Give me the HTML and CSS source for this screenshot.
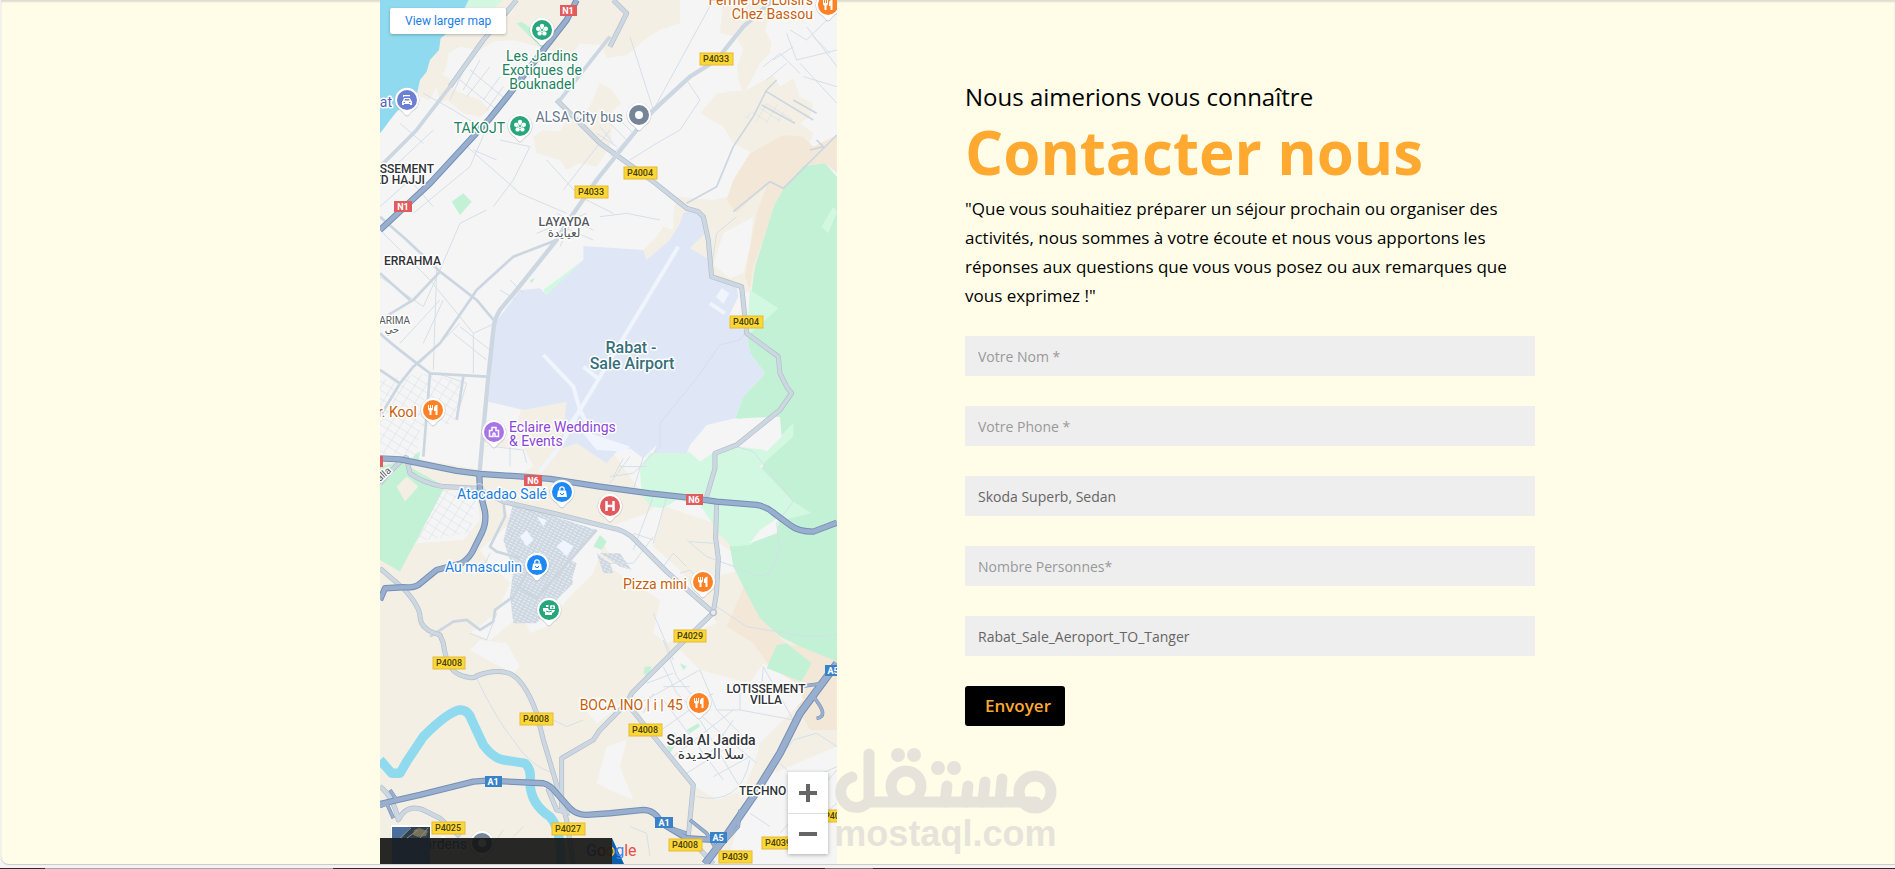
FILE: index.html
```html
<!DOCTYPE html>
<html lang="fr">
<head>
<meta charset="utf-8">
<title>Contacter nous</title>
<link rel="stylesheet" href="styles.css">
</head>
<body>
<main class="page">
  <section class="map" aria-label="Carte">
    <svg class="map-canvas" viewBox="0 0 457 864" preserveAspectRatio="xMinYMin slice">
      <defs>
        <pattern id="blocks" width="28" height="22" patternUnits="userSpaceOnUse" patternTransform="rotate(32)">
          <path class="street" d="M0 0H28M0 0V22"/>
        </pattern>
        <pattern id="dense" width="13" height="9" patternUnits="userSpaceOnUse" patternTransform="rotate(28)">
          <rect width="13" height="9" fill="#cdd7e1"/><rect x="2" y="3" width="8" height="3" fill="#edf0f3"/>
        </pattern>
        <g id="pin-base">
          <path d="M0 16.500C-2 16.500-3 13-7 10.500A12.500 12.500 0 1 1 7 10.500C3 13 2 16.500 0 16.500Z" fill="#8a8f94" opacity=".4"/>
          <path d="M0 15.500C-2 15.500-3 12-7 9.500A12 12 0 1 1 7 9.500C3 12 2 15.500 0 15.500Z" fill="#fff"/>
        </g>
        <g id="food" fill="#fff"><path d="M-5-5h1v3h1v-3h1v3h1v-3h1v4q0 1-1.500 1.800V5h-2V.8Q-5 0-5-1Z"/><path d="M4.500-5.500V5h-2V1H1v-3.500Q1.500-5 4.500-5.500Z"/></g>
        <g id="flower"><g fill="#fff"><circle cy="-4" r="2.200"/><circle cx="3.800" cy="-1.200" r="2.200"/><circle cx="2.400" cy="3.400" r="2.200"/><circle cx="-2.400" cy="3.400" r="2.200"/><circle cx="-3.800" cy="-1.200" r="2.200"/><circle r="2"/></g><circle r="1" fill="#26a67a"/></g>
        <g id="bag"><path d="M-4-1.500H4L5 5H-5Z" fill="#fff"/><path d="M-2.200-1.500V-3a2.200 2.200 0 0 1 4.400 0v1.500" fill="none" stroke="#fff" stroke-width="1.300"/><path d="M-1.700 1a1.700 1.700 0 0 0 3.400 0" fill="none" stroke="#1e88f5"/></g>
        <path id="r-n1" d="M590 0L560 60 490 150 440 215 390 280 330 355 150 550 0 690"/>
        <path id="r-n6" d="M0 1375L60 1378 120 1390 230 1413 300 1422 430 1430 510 1437 660 1460 810 1480 920 1492 1010 1505 1130 1515Q1160 1520 1180 1538L1230 1575Q1255 1595 1300 1595L1371 1568"/>
        <path id="r-ring" d="M298 1425L300 1475 315 1535Q320 1570 305 1600L280 1650Q270 1672 245 1690L170 1710 115 1755Q100 1764 70 1762L15 1765 0 1800"/>
        <path id="r-a1" d="M0 2412L120 2385 280 2345 320 2342 490 2350Q510 2354 530 2380L570 2425Q590 2445 620 2445L690 2440 790 2430Q825 2430 845 2470L920 2515 1000 2520"/>
        <path id="r-a5" d="M1371 1990L1260 2140 1200 2260 1120 2390 1030 2520 975 2592"/>
        <path id="r-a5b" d="M1260 2060L1330 2050M1300 2090Q1350 2150 1310 2155M930 2460L980 2500 1010 2550M1080 2430L1075 2480 1030 2530M30 2370L50 2400 0 2420M20 2410L40 2455M830 2470L920 2500"/>
        <path id="r-p4004" d="M530 300L660 430 820 545 920 625 955 635 970 650 985 720 995 830 1085 860 1100 1000 1195 1070 1200 1120 1220 1160 1235 1180 1200 1230 1070 1335 1005 1360 1005 1405 980 1490"/>
        <path id="r-diag" d="M0 1450Q80 1360 80 1375L90 1420Q130 1450 190 1460L290 1465 370 1505 520 1540 690 1583Q740 1590 770 1625L860 1715 1000 1838 900 1935 755 2080 740 2110 660 2190 640 2220 545 2275V2430"/>
        <path id="r-east" d="M1010 1510L1007 1615 1015 1675 1010 1775 1000 1838"/>
        <path id="r-p4008" d="M0 1705L70 1765Q120 1820 120 1850Q122 1890 180 1905L190 1930Q200 2010 240 2025T290 2028Q340 2008 380 2018Q430 2030 470 2140L490 2220 520 2320 560 2460 580 2592"/>
        <path id="r-sala" d="M740 2110L940 2355 925 2510 1000 2592M530 2370H505L530 2430 570 2440M0 2360Q40 2390 55 2460Q80 2410 130 2430L180 2455 240 2510"/>
      </defs>

      <g class="terrain" transform="scale(.3333)">
        <path class="urban" d="M0 0H1380V2600H0Z"/>
        <path class="farm" d="M255 22L370 0H900V70L840 90 800 115 740 165 680 175 665 135 600 130 560 190 510 150 400 120 340 125 300 150 240 140 205 160 200 200 150 300 110 285 120 240 140 215 150 180 177 150 182 115 198 102Z"/>
        <path class="farm" d="M160 210L210 235 220 270 300 300 330 330 300 350 250 340 200 300 180 310ZM460 410L490 390 540 395 560 360 620 340 660 250 690 265 725 310 700 330 690 440 650 500 600 490 560 510 540 480 470 460ZM1030 0H1150L1170 50 1155 90 1175 130 1170 160 1140 190 1120 230 1090 280 1075 240 1070 200 1090 150 1070 110 1020 100ZM1010 280L1100 270 1180 225 1200 260 1240 235 1260 290 1300 310 1290 350 1260 370 1300 400 1280 450 1110 455 1060 430 1030 380 960 340ZM880 640L890 590 1000 600 1180 560 1150 700 1110 880 1060 860 990 830 985 800 930 745 960 690 900 720 800 780 790 750 830 710 850 680 880 690Z"/>
        <path class="farm-dark" d="M1040 600L1060 540 1110 460 1210 405 1270 410 1300 440 1371 405V520L1335 490 1270 498 1215 560 1185 610 1150 720 1120 800 1110 870 1095 830 1110 740 1130 640 1160 560 1110 600 1070 640Z"/>
        <path class="urban" d="M1030 700L1120 650 1110 740 1090 820 1050 835 1000 795Z"/>
        <path class="farm" d="M0 1385L310 1340 400 1310 430 1205 560 1205 600 1300 700 1360 800 1500 1030 1580 1110 1740 1371 1960V2592H0Z"/>
        <path class="farm-dark" d="M1100 1740L1140 1850 1220 1935 1320 1940 1371 1960V2190L1290 2190 1240 2100 1120 1930 1040 1880ZM1180 1960L1240 1990 1371 1990V2180L1300 2190Z"/>
        <path class="urban" d="M0 1160L320 1130 310 1410 130 1380 90 1360 0 1370ZM310 1340L430 1340 460 1400 420 1425 310 1410ZM170 1470L290 1475 300 1560 250 1620 110 1630ZM370 1495L520 1540 690 1580 640 1720 560 1800 500 1880 450 1900 430 1840 330 1920 270 1900 350 1840 390 1750 330 1690 300 1650 390 1570ZM660 1590L800 1540 860 1490 820 1640 900 1710 990 1830 1010 1870 860 1930 820 1900 840 1800 700 1710ZM300 1920L380 1930 420 2000 400 2020 340 1990 270 1950ZM1020 1630L1060 1660 1080 1710 1010 1730Z"/>
        <path class="urban" d="M760 2080L900 1950 960 2010 1110 2050 1150 1990 1250 2050 1270 2100 1140 2230 1120 2300 1090 2370 1010 2400 930 2350 800 2200ZM680 2240L740 2220 720 2300 760 2400 690 2370 650 2350ZM600 2110L660 2090 720 2120 650 2170ZM1090 2420L1180 2320 1371 2240V2592H1040Z"/>
        <path class="green" d="M1371 530L1335 490 1270 498 1215 560 1185 610 1175 640 1150 720 1125 800 1115 870 1100 1000 1110 1060 1155 1120 1090 1190 1065 1255 1200 1270 1050 1640 1060 1700 1100 1780 1140 1855 1200 1910 1260 1940 1371 1985Z"/>
        <path class="green" d="M1190 1935L1160 2005 1265 2045 1295 1990 1220 1930ZM0 1400L60 1385 195 1460 100 1640 60 1715 0 1680ZM100 1370L120 1355 115 1390 90 1400ZM410 70L425 65 520 130 490 150ZM215 605L250 580 275 605 240 645ZM450 840L465 835 455 850ZM795 2000L815 2000 805 2030 790 2020ZM900 1990L920 2000 910 2010ZM920 2190L955 2170 960 2180 930 2200ZM860 2240L890 2230 870 2260ZM640 1640L660 1605 680 1625 665 1650Z"/>
        <path class="green-light" d="M255 22L266 0H370L345 22ZM1110 870L1195 925 1100 1010ZM780 1405L810 1360 930 1357 960 1385 1005 1355 1070 1340 1160 1350 1240 1270V1310L1140 1400 1240 1505 1295 1540 1190 1565 1110 1635 1055 1640 1020 1605 960 1515 890 1500 850 1525 810 1520 785 1485ZM490 870L610 780V795L500 885ZM1325 680L1360 620 1371 635 1345 700Z"/>
        <path class="urban" d="M960 1280L1090 1255 1200 1250 1205 1310 1160 1355 1120 1335 1070 1340 1000 1355 960 1385 930 1355ZM1110 1630L1140 1590 1200 1550 1190 1600Z"/>
        <path class="farm" d="M50 1460L80 1430 115 1460 75 1505Z"/>
        <path class="airport" d="M610 738L790 750 800 780 870 720 900 670 910 640 940 630 970 640 985 690 930 745 990 780 995 830 1070 860 1075 890 1045 950 1100 1000 1110 1060 1155 1120 1090 1190 1065 1255 980 1275 930 1335 920 1360 820 1360 830 1335 790 1375 750 1345 710 1355 680 1390 590 1330 530 1350 550 1290 560 1205 430 1230 325 1205 345 970 420 870 480 865 500 885 610 780Z"/>
        <path class="runway" d="M490 1065L580 1160 600 1230 625 1280M895 740L600 1230 540 1340 480 1415M610 1100L660 1140M990 910L1035 940M600 1230L560 1290"/>
        <path class="apron" d="M1008 890L1025 865 1048 880 1030 912ZM600 1290L750 1340 730 1355 650 1350Z"/>
        <path class="sea" d="M0 0H266L255 22 198 102 182 115 177 150 150 180 140 215 120 240 110 285 50 335 30 360 12 385 0 400Z"/>
        <path class="river" d="M0 2280L35 2320H60L80 2285 130 2210Q205 2135 240 2130Q265 2130 275 2160L310 2235Q340 2275 370 2280L435 2290Q455 2310 450 2340Q448 2410 510 2450Q545 2490 542 2592"/>
        <path fill="url(#blocks)" d="M0 1140L140 1120 260 1150 225 1270 120 1280 110 1370 0 1360ZM180 1465L290 1490 270 1600 110 1625ZM1090 350L1180 300 1240 360 1140 370Z"/>
        <path fill="url(#dense)" d="M400 1510L650 1590 560 1690 580 1750 520 1810 470 1870 400 1870 390 1790 400 1710 370 1620ZM650 1660L690 1690 700 1720 670 1720ZM660 1660L720 1660 755 1710 720 1700ZM570 1680L590 1690 570 1760 550 1760Z"/>
        <path class="apron" d="M420 1610L440 1590 460 1620 440 1640ZM530 1640L550 1620 580 1640 560 1670ZM470 1550L500 1560 490 1580Z"/>
      </g>

      <g class="roads" transform="scale(.3333)">
        <path class="street" d="M210 300L260 190M240 240L350 330M270 210L380 300M300 180L250 270M330 200L260 290M360 230L310 300M370 260L320 330M0 540L160 390M130 280L220 330 300 380M60 370L130 430M0 620L90 540 160 620M250 430L420 580 560 640M100 640L270 500 330 360M360 420L450 440 400 540 340 620M500 480L600 590 700 640M550 570L690 390M280 450L350 480M660 380L700 430M650 400L710 440M690 370L740 420M720 360L760 400M750 110L820 330 1000 0M690 470L920 240 960 300 900 390 830 430 750 480M1230 90L1280 120 1371 30M1220 100L1250 180 1371 150M1150 200L1200 160 1260 220M1180 180L1240 140M1160 240L1220 190M1260 190L1371 310M1270 230L1371 260M1280 80L1371 200M1300 110L1350 160"/>
        <path class="lane-thin" d="M1371 405L1210 565 1170 545 1060 635M1190 240L1160 270 1120 350 1060 440 1010 560 920 610M1160 275L1300 360M1145 315L1245 370M1240 300L1310 340M1290 450L1330 440 1310 420"/>
        <path class="street" d="M0 690L150 840 280 1000 345 970M0 830L130 920 180 810 240 670 320 630M170 810L160 1110M220 1000L320 1080M240 980L330 1050M190 900L130 1030M60 1030L180 900M120 1090L240 970M280 1000V1120M170 1120L260 1150 230 1250M360 870L410 900M390 840L430 880M340 1340L430 1350 440 1390M390 1340V1400M500 660L640 720M470 700L620 640M530 640L640 690M540 740L580 650M660 650L740 640 840 660M990 830L1010 700 1070 650"/>
        <path class="lane" d="M0 960L100 900 180 815 290 900 345 965M180 815L80 720 0 650M530 720L400 770 290 870 270 900 180 1030 100 1100 60 1150 0 1250M0 1000Q30 1030 150 1120L320 1130M0 1110L60 1150M150 1120L130 1370M250 1130L230 1260M0 820L90 900"/>
        <path class="street" d="M950 1135L1020 1035 1080 1020 1100 990M950 1135L840 1270V1340L760 1420 690 1430M750 1370L690 1450M790 1370L760 1470M720 1400H800M730 1375L700 1430M820 1490L760 1650M860 1490L820 1630M760 1600L820 1620M920 1620L980 1670 1090 1710 1130 1730 1170 1720 1200 1640 1190 1570 1240 1505 1120 1355 1070 1340M930 1625L1000 1630M1010 1820L1100 1880 1280 1910 1371 1905M850 1700L880 1660 920 1700M900 1720L930 1710 970 1750M820 1840L880 1980M690 1690L760 1690 820 1610"/>
        <path class="lane" d="M370 1500L375 1550 330 1640 350 1655 420 1675M440 1720L400 1790 345 1830 340 1865 300 1890 260 1860 220 1865 150 1910M400 1750L470 1795 650 1590"/>
        <path class="street" d="M270 1900L320 1920 350 1840M290 2035Q350 2160 400 2220Q450 2300 520 2320M330 1660L310 1700 360 1700M520 2160L560 2180 610 2160M800 2050L880 2020M850 2060L930 2060M760 2120L960 2010 1010 2130 1090 2210M850 2000L890 2080 1000 2180 1130 2290M830 2200L1000 2080M880 2270L1060 2130M920 2320L1110 2200M1000 2330L1110 2270M850 2100L1030 2340M1060 2160L990 2260M960 2160L1090 2380M820 2080L790 2140M1010 2130H1080L1240 2160 1150 2000 1140 2120M1080 2060V2130M950 2390Q1080 2420 1110 2280M1371 2240L1310 2200 1240 2220 1080 2430M1371 2310L1200 2500M1371 2410L1230 2530M1110 2440L1170 2480M750 2480L800 2500 810 2570M1200 2290L1260 2350 1371 2300M350 2520L370 2490M400 2510L430 2480M850 1920L890 2030 980 2140"/>
        <g class="road-case"><use href="#r-p4004"/><use href="#r-diag"/><use href="#r-east"/><use href="#r-p4008"/><use href="#r-sala"/><path d="M410 0L310 120 210 260M690 140L740 40 700 0"/></g>
        <path class="road wide" d="M1180 0L1090 80 1010 180 930 230 810 340 710 465 650 540 560 670 530 720 410 870 360 930Q342 960 340 990L325 1130 310 1290 298 1425"/>
        <g class="road"><use href="#r-p4004"/><use href="#r-diag"/><use href="#r-east"/><use href="#r-p4008"/><use href="#r-sala"/><path d="M410 0L310 120 210 260 110 390 0 500M690 140L740 40 700 0M540 300L690 110"/></g>
        <g class="highway-case"><use href="#r-n1"/><use href="#r-n6"/><use href="#r-ring"/><use href="#r-a1"/><use href="#r-a5" stroke-width="24"/><use href="#r-a5b" stroke-width="11"/></g>
        <g class="highway"><use href="#r-n1"/><use href="#r-n6"/><use href="#r-ring"/><use href="#r-a1"/><use href="#r-a5" stroke-width="18"/><use href="#r-a5b" stroke-width="8"/></g>
        <circle class="street" cx="298" cy="1465" r="14" fill="none"/><circle cx="1000" cy="1838" r="9" fill="#e8edf2" stroke="#b4c0cd" stroke-width="4"/>
      </g>

      <g class="shields yellow">
        <rect x="320" y="53" width="33" height="12"/><text x="336" y="62">P4033</text>
        <rect x="244" y="167" width="33" height="12"/><text x="260" y="176">P4004</text>
        <rect x="195" y="186" width="33" height="12"/><text x="211" y="195">P4033</text>
        <rect x="350" y="316" width="33" height="12"/><text x="366" y="325">P4004</text>
        <rect x="294" y="630" width="32" height="12"/><text x="310" y="639">P4029</text>
        <rect x="53" y="657" width="32" height="12"/><text x="69" y="666">P4008</text>
        <rect x="140" y="713" width="33" height="12"/><text x="156" y="722">P4008</text>
        <rect x="52" y="822" width="33" height="12"/><text x="68" y="831">P4025</text>
        <rect x="172" y="823" width="33" height="12"/><text x="188" y="832">P4027</text>
        <rect x="249" y="724" width="33" height="12"/><text x="265" y="733">P4008</text>
        <rect x="289" y="839" width="33" height="12"/><text x="305" y="848">P4008</text>
        <rect x="339" y="851" width="33" height="12"/><text x="355" y="860">P4039</text>
        <rect x="382" y="837" width="33" height="12"/><text x="398" y="846">P4039</text>
        <rect x="441" y="810" width="33" height="12"/><text x="457" y="819">P4039</text>
      </g>
      <g class="shields red">
        <rect x="180" y="5" width="17" height="11"/><text x="188" y="14">N1</text>
        <rect x="14" y="201" width="18" height="11"/><text x="23" y="210">N1</text>
        <rect x="144" y="475" width="18" height="11"/><text x="153" y="484">N6</text>
        <rect x="306" y="494" width="17" height="11"/><text x="314" y="503">N6</text>
        <rect x="-14" y="456" width="17" height="11"/>
      </g>
      <g class="shields blue">
        <rect x="105" y="776" width="17" height="11"/><text x="113" y="785">A1</text>
        <rect x="275" y="817" width="18" height="11"/><text x="284" y="826">A1</text>
        <rect x="330" y="832" width="17" height="11"/><text x="338" y="841">A5</text>
        <rect x="445" y="665" width="17" height="11"/><text x="453" y="674">A5</text>
      </g>

      <g class="labels">
        <g class="park mid"><text x="162" y="61">Les Jardins</text><text x="162" y="75">Exotiques de</text><text x="162" y="89">Bouknadel</text></g>
        <text class="park end" x="125" y="133">TAKOJT</text>
        <text class="transit end" x="243" y="122">ALSA City bus</text>
        <text class="food end" x="433" y="5">Ferme De Loisirs</text><text class="food end" x="433" y="19">Chez Bassou</text>
        <text class="beach end" x="12" y="107">at</text>
        <g class="district"><text class="end" x="54" y="173">LOTISSEMENT</text><text class="end" x="45" y="184">OULED HAJJI</text><text x="4" y="265">ERRAHMA</text><text class="mid" x="386" y="693">LOTISSEMENT</text><text class="mid" x="386" y="704">VILLA</text><text x="359" y="795">TECHNO</text></g>
        <text class="suburb mid" x="184" y="226">LAYAYDA</text><text class="suburb mid" x="184" y="237">لعيايدة</text>
        <text class="small end" x="30" y="324">KARIMA</text><text class="small mid" x="12" y="333">حي</text>
        <g class="airport-name mid"><text x="251" y="353">Rabat -</text><text x="252" y="369">Sale Airport</text></g>
        <text class="food end" x="37" y="417">Mr. Kool</text>
        <text class="venue" x="129" y="432">Eclaire Weddings</text><text class="venue" x="129" y="446">&amp; Events</text>
        <text class="shop end" x="167" y="499">Atacadao Salé</text>
        <text class="shop end" x="142" y="572">Au masculin</text>
        <text class="food end" x="307" y="589">Pizza mini</text>
        <text class="food end" x="303" y="710">BOCA INO | i | 45</text>
        <g class="town mid"><text x="331" y="745">Sala Al Jadida</text><text x="331" y="759">سلا الجديدة</text></g>
        <text class="small" transform="translate(0 482) rotate(-42)">alla</text>
        <text class="transit end" x="87" y="849">0 Gardens</text>
      </g>

      <g class="pins">
        <g transform="translate(162 30)"><use href="#pin-base"/><circle r="10" fill="#26a67a"/><use href="#flower"/></g>
        <g transform="translate(140 126)"><use href="#pin-base"/><circle r="10" fill="#26a67a"/><use href="#flower"/></g>
        <g transform="translate(27 100)"><use href="#pin-base"/><circle r="10" fill="#6c7fd3"/><path d="M-4-5H3v1.300H-3V-3H-4ZM-3-2H3l1 2.500 1 1V5H3V4H-3V5H-5V1.500l1-1Z" fill="#fff"/><path d="M-2-1H2L2.600.500H-2.600ZM-3.500 2h1.500v1h-1.500ZM2 2h1.500v1H2Z" fill="#6c7fd3"/></g>
        <g transform="translate(259 115)"><use href="#pin-base"/><circle r="10" fill="#758699"/><circle r="4" fill="#fff"/></g>
        <g transform="translate(448 5)"><use href="#pin-base"/><circle r="10" fill="#ff8126"/><use href="#food"/></g>
        <g transform="translate(53 410)"><use href="#pin-base"/><circle r="10" fill="#ff8126"/><use href="#food"/></g>
        <g transform="translate(114 432)"><use href="#pin-base"/><circle r="10" fill="#a973e8"/><path d="M-4.500 4.500V-1.500H-2V-4.500H2V-1.500H4.500V4.500H1V2A1 1 0 0 0-1 2V4.500Z" fill="none" stroke="#fff" stroke-width="1.500"/></g>
        <g transform="translate(182 492)"><use href="#pin-base"/><circle r="10" fill="#1e88f5"/><use href="#bag"/></g>
        <g transform="translate(230 506)"><use href="#pin-base"/><circle r="10" fill="#e15a5d"/><path d="M-3.500-5V5M3.500-5V5M-3.500 0H3.500" fill="none" stroke="#fff" stroke-width="2.500"/></g>
        <g transform="translate(157 565)"><use href="#pin-base"/><circle r="10" fill="#1e88f5"/><use href="#bag"/></g>
        <g transform="translate(169 610)"><use href="#pin-base"/><circle r="10" fill="#26a67a"/><path d="M-6-2H-1L0 0H6L5 2 3 3V5H-4V2L-6 1ZM-3-5h2.500v2h-2.500ZM1-4L2-5 3.500-4.500 5-5 6-4V-1H1Z" fill="#fff"/><circle cx="3.500" cy="-2.500" r="1" fill="#26a67a"/><path d="M-3 1Q0 3 3 1" fill="none" stroke="#26a67a"/></g>
        <g transform="translate(323 582)"><use href="#pin-base"/><circle r="10" fill="#ff8126"/><use href="#food"/></g>
        <g transform="translate(319 703)"><use href="#pin-base"/><circle r="10" fill="#ff8126"/><use href="#food"/></g>
        <g transform="translate(102 843)"><use href="#pin-base"/><circle r="10" fill="#758699"/><circle r="4" fill="#fff"/></g>
      </g>
      <g class="attribution">
        <path d="M232 838L244 864H232Z" fill="#0a5fa6"/>
        <text x="206" y="856"><tspan fill="#4285f4">G</tspan><tspan fill="#ea4335">o</tspan><tspan fill="#fbbc05">o</tspan><tspan fill="#4285f4">g</tspan><tspan fill="#e8504a">le</tspan></text>
        <rect y="838" width="232" height="26" fill="#111" opacity=".9"/>
        <rect x="11" y="825" width="40" height="13" fill="#fff"/>
        <path d="M12 827H50V864H12Z" fill="#1c2229"/><path d="M12 827H50V838H12Z" fill="#2f3f4b"/><path d="M12 827H31L22 838H12Z" fill="#4a6f9c"/><path d="M34 830l5-2 9 3-2 5-8 1-5-2Z" fill="#77705a"/><path d="M20 838L31 828M27 838L38 830M40 838L48 828" stroke="#8d8a78"/>
      </g>
    </svg>
    <a class="larger-map" href="#carte">View larger map</a>
    <div class="zoom">
      <button class="zoom-button" type="button" aria-label="Zoom avant"><svg width="18" height="18" viewBox="0 0 18 18"><path d="M0 9H18M9 0V18"/></svg></button>
      <button class="zoom-button" type="button" aria-label="Zoom arrière"><svg width="18" height="18" viewBox="0 0 18 18"><path d="M0 9H18"/></svg></button>
    </div>
  </section>

  <section class="contact">
    <p class="eyebrow">Nous aimerions vous connaître</p>
    <h1 class="title">Contacter nous</h1>
    <p class="intro">"Que vous souhaitiez préparer un séjour prochain ou organiser des activités, nous sommes à votre écoute et nous vous apportons les réponses aux questions que vous vous posez ou aux remarques que vous exprimez !"</p>
    <form class="form">
      <input class="field" type="text" placeholder="Votre Nom *" aria-label="Votre Nom">
      <input class="field" type="tel" placeholder="Votre Phone *" aria-label="Votre Phone">
      <input class="field" type="text" value="Skoda Superb, Sedan" aria-label="Véhicule">
      <input class="field" type="text" placeholder="Nombre Personnes*" aria-label="Nombre Personnes">
      <input class="field" type="text" value="Rabat_Sale_Aeroport_TO_Tanger" aria-label="Trajet">
      <button class="submit" type="button">Envoyer</button>
    </form>
  </section>

  <div class="watermark">
    <svg class="watermark-logo" width="226" height="68" viewBox="0 0 226 68" fill="none" stroke="currentColor" stroke-width="11" stroke-linecap="round" aria-hidden="true">
      <path d="M20 29A15.500 15.500 0 1 0 36 54H204M37 6V54"/>
      <circle cx="74" cy="38" r="15"/><circle cx="203" cy="44" r="16"/>
      <path d="M113 54L115 38M134 54L136 38M151 54L153 34M168 54L170 31"/>
      <g fill="currentColor" stroke="none"><circle cx="66" cy="7" r="7"/><circle cx="82" cy="7" r="7"/><circle cx="106" cy="20" r="7"/><circle cx="122" cy="20" r="7"/></g>
    </svg>
    <span class="watermark-name">mostaql.com</span>
  </div>
</main>
<div class="taskbar"></div>
</body>
</html>
```

FILE: styles.css
```css
* { box-sizing: border-box; }

body {
  margin: 0;
  min-height: 100vh;
  display: flex;
  flex-direction: column;
  background: #f5f3f4;
  font-family: "Open Sans", "Noto Sans", sans-serif;
  color: #000;
}

.page {
  position: relative;
  flex: 1;
  display: grid;
  grid-template-columns: 379fr 457fr 128fr 570fr 360fr;
  margin-left: 1px;
  background: #fffde8;
  border-bottom-left-radius: 8px;
  box-shadow: 0 1px 1px #c9c9c9, inset 0 2px 2px #dedcd0;
  overflow: hidden;
}

.map {
  grid-column: 2;
  position: relative;
  overflow: hidden;
}

.map-canvas {
  display: block;
  width: 100%;
  height: 100%;
  font-family: Roboto, "DejaVu Sans", sans-serif;
}

.urban { fill: #f5f5f5; }
.farm { fill: #f4efe5; }
.farm-dark { fill: #f3e8d7; }
.green { fill: #c3f1d5; }
.green-light { fill: #d3f8e2; }
.airport { fill: #dfe6f6; }
.apron { fill: #f0f5fd; }
.sea { fill: #8fdaee; }
.river { fill: none; stroke: #8fdaee; stroke-width: 28; stroke-linejoin: round; }
.runway { fill: none; stroke: #f0f5fd; stroke-width: 12; }
.street { fill: none; stroke: #d5dfe8; stroke-width: 3; }
.lane { fill: none; stroke: #cbd6e0; stroke-width: 8; }
.lane-thin { fill: none; stroke: #cbd6e0; stroke-width: 5; }
.roads { stroke-linejoin: round; }
.road-case { fill: none; stroke: #b1becb; stroke-width: 15; }
.road { fill: none; stroke: #ccd7e1; stroke-width: 11; }
.wide { stroke-width: 13; }
.highway-case { fill: none; stroke: #7190b8; stroke-width: 19; }
.highway { fill: none; stroke: #9aafcd; stroke-width: 13; }

.shields { font-size: 9px; font-weight: 500; text-anchor: middle; }
.yellow rect { fill: #fdd835; stroke: #e5b93a; }
.yellow text { fill: #4a4010; }
.red rect { fill: #e25c5e; }
.blue rect { fill: #3a82c8; }
.red text, .blue text { fill: #fff; font-weight: 700; }

.labels text {
  font-size: 14px;
  stroke: #fff;
  stroke-width: 3px;
  stroke-linejoin: round;
  paint-order: stroke;
}
.end { text-anchor: end; }
.mid { text-anchor: middle; }
.park { fill: #1c8260; }
.transit { fill: #68788c; }
.food { fill: #c8610c; }
.beach { fill: #5264b8; }
.venue { fill: #8a45d6; }
.shop { fill: #1a7de0; }
.labels .district text { font-size: 12px; font-weight: 500; fill: #303236; }
.labels .suburb { font-size: 12px; font-weight: 500; fill: #55585c; }
.labels .small { font-size: 10px; fill: #55585c; }
.labels .airport-name text { font-size: 16px; font-weight: 500; fill: #36707b; }
.labels .town text { font-weight: 500; fill: #303236; }
.attribution text { font-size: 16px; }

.larger-map {
  position: absolute;
  left: 10px;
  top: 8px;
  padding: 0 15px;
  border-radius: 2px;
  background: #fff;
  box-shadow: 0 1px 3px rgba(0, 0, 0, .25);
  color: #1a7de8;
  font: 12px/26px Roboto, sans-serif;
  text-decoration: none;
}

.zoom {
  position: absolute;
  right: 9px;
  bottom: 10px;
  width: 40px;
  background: #fff;
  box-shadow: 0 1px 4px rgba(0, 0, 0, .3);
}

.zoom-button {
  display: grid;
  place-items: center;
  width: 100%;
  height: 41px;
  padding: 0;
  border: 0;
  background: none;
}
.zoom-button + .zoom-button { box-shadow: inset 0 1px #e0e0e0; }
.zoom-button path { fill: none; stroke: #666; stroke-width: 4; }

.contact {
  grid-column: 4;
  padding-top: 80px;
}

.eyebrow { margin: 0; font-size: 24px; line-height: 34px; }
.title { margin: 2px 0 0; font-size: 60px; line-height: 72px; color: #ffa931; }
.intro { margin: 6px 0 0; font-size: 17px; line-height: 29px; }

.form {
  display: flex;
  flex-direction: column;
  align-items: flex-start;
  gap: 30px;
  margin-top: 26px;
}

.field {
  width: 100%;
  height: 40px;
  padding: 0 13px;
  border: 0;
  background: #eee;
  color: #666;
  font: 14px/20px "Open Sans", sans-serif;
}
.field::placeholder { color: #999; opacity: 1; }

.submit {
  height: 40px;
  padding: 0 14px 0 20px;
  border: 0;
  border-radius: 3px;
  background: #000;
  color: #ffa931;
  font: 600 17px/24px "Open Sans", sans-serif;
}

.watermark {
  position: absolute;
  left: 44%;
  bottom: 12px;
  display: flex;
  flex-direction: column;
  color: #e6e4da;
  pointer-events: none;
}
.watermark-logo { margin-left: -2px; }
.watermark-name { font: 700 36px/36px "Liberation Sans", Arial, sans-serif; }

.taskbar {
  height: 1px;
  margin-top: 4px;
  background: linear-gradient(90deg, #3a2622 45px, #aaa7aa 45px 333px, #3a2622 333px 825px, #777 825px 873px, #3a2622 873px);
}
```
